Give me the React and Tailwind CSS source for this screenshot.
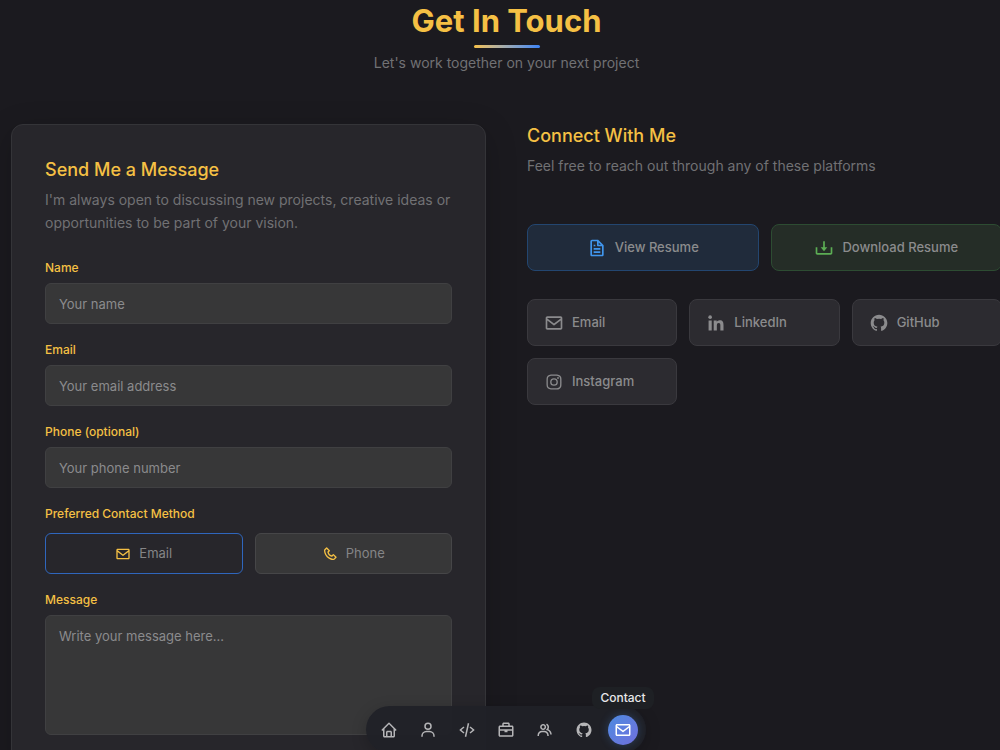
import {
  BiBriefcase, BiCodeAlt, BiDownload, BiEnvelope, BiFile, BiGroup, BiHome,
  BiLogoGithub, BiLogoInstagram, BiLogoLinkedin, BiPhone, BiUser,
} from "react-icons/bi";

const fields = [
  { id: "name", label: "Name", type: "text", placeholder: "Your name" },
  { id: "email", label: "Email", type: "email", placeholder: "Your email address" },
  { id: "phone", label: "Phone (optional)", type: "tel", placeholder: "Your phone number" },
];

const methods = [
  { label: "Email", Icon: BiEnvelope },
  { label: "Phone", Icon: BiPhone },
];

const socials = [
  { label: "Email", Icon: BiEnvelope },
  { label: "LinkedIn", Icon: BiLogoLinkedin },
  { label: "GitHub", Icon: BiLogoGithub },
  { label: "Instagram", Icon: BiLogoInstagram },
];

const navItems = [
  { label: "Home", Icon: BiHome },
  { label: "About", Icon: BiUser },
  { label: "Skills", Icon: BiCodeAlt },
  { label: "Experience", Icon: BiBriefcase },
  { label: "Community", Icon: BiGroup },
  { label: "GitHub", Icon: BiLogoGithub },
];

const headingClass = "text-lg leading-6 font-medium text-[#f5c044]";
const leadClass = "mt-1.5 text-sm leading-[23px] text-[#717174]";
const labelClass = "block text-xs leading-[18px] font-medium text-[#f5c044]";
const controlClass =
  "block w-full rounded-md border border-[#404042] bg-[#373738] px-[13px] text-[13px] text-[#b0b0b0] placeholder:text-[#8b8b8d] outline-none";

function Header() {
  return (
    <header className="flex flex-col items-center pt-[3px]">
      <h1 className="text-[31px] leading-9 font-bold text-[#f5c044]">Get In Touch</h1>
      <div className="mt-1.5 h-[3px] w-[66px] rounded-full bg-linear-to-r from-[#f5c044] to-[#3b82f6]" />
      <p className="mt-[3px] text-sm leading-[23px] text-[#717174]">Let's work together on your next project</p>
    </header>
  );
}

function ContactForm() {
  return (
    <form className="rounded-xl border border-[#343438] bg-[#27262b] px-[33px] pt-[33px] pb-8 shadow-[0_8px_32px_rgba(0,0,0,0.2)]">
      <h2 className={headingClass}>Send Me a Message</h2>
      <p className={leadClass}>
        I'm always open to discussing new projects, creative ideas or opportunities to be part of your vision.
      </p>
      <div className="mt-[25px] flex flex-col gap-[17px]">
        {fields.map((f) => (
          <div key={f.id} className="flex flex-col gap-1.5">
            <label htmlFor={f.id} className={labelClass}>{f.label}</label>
            <input id={f.id} type={f.type} placeholder={f.placeholder} className={`${controlClass} h-[41px]`} />
          </div>
        ))}
        <fieldset>
          <legend className={labelClass}>Preferred Contact Method</legend>
          <div className="mt-2.5 grid grid-cols-2 gap-3">
            {methods.map(({ label, Icon }, i) => (
              <label
                key={label}
                className="flex h-[41px] items-center justify-center gap-2 rounded-md border border-[#464648] bg-[#373738] text-[13px] text-[#858587] has-checked:border-[#2f66bd] has-checked:bg-transparent"
              >
                <input type="radio" name="method" value={label} defaultChecked={i === 0} className="sr-only" />
                <Icon className="size-4 text-[#f5c044]" />
                {label}
              </label>
            ))}
          </div>
        </fieldset>
        <div className="flex flex-col gap-1.5">
          <label htmlFor="message" className={labelClass}>Message</label>
          <textarea
            id="message"
            placeholder="Write your message here..."
            className={`${controlClass} h-[120px] resize-none py-[11px] leading-[18px]`}
          />
        </div>
      </div>
    </form>
  );
}

function Connect() {
  return (
    <section>
      <h2 className={headingClass}>Connect With Me</h2>
      <p className={leadClass}>Feel free to reach out through any of these platforms</p>
      <div className="mt-[47px] grid grid-cols-2 gap-3 text-[13px] font-medium text-[#8b8b8d]">
        <a href="#resume" className="flex h-[47px] items-center justify-center gap-2 rounded-lg border border-[#234670] bg-[#202b3b]">
          <BiFile className="size-5 text-[#4096ee]" />
          View Resume
        </a>
        <a href="#download" className="flex h-[47px] items-center justify-center gap-2 rounded-lg border border-[#2d4c32] bg-[#252d27]">
          <BiDownload className="size-5 text-[#5cad54]" />
          Download Resume
        </a>
      </div>
      <div className="mt-7 grid grid-cols-3 gap-3 text-[13px] font-medium text-[#8b8b8d]">
        {socials.map(({ label, Icon }) => (
          <a key={label} href={`#${label}`} className="flex h-[47px] items-center gap-2 rounded-lg border border-[#3a393e] bg-[#2c2b30] px-4">
            <Icon className="size-5" />
            {label}
          </a>
        ))}
      </div>
    </section>
  );
}

function Dock() {
  return (
    <nav className="fixed inset-x-0 -bottom-[3px] flex justify-center pl-3">
      <div className="flex h-[47px] items-center gap-[9px] rounded-full bg-[#202127]/95 px-2 text-[#b5b5b7] shadow-[0_4px_16px_rgba(0,0,0,0.2)]">
        {navItems.map(({ label, Icon }) => (
          <a key={label} href={`#${label}`} aria-label={label} className="flex size-[30px] items-center justify-center">
            <Icon className="size-[18px]" />
          </a>
        ))}
        <a
          href="#contact"
          className="relative flex size-[30px] items-center justify-center rounded-full bg-linear-to-br from-[#4a8ae0] to-[#6f6fdd] text-white shadow-[0_0_10px_rgba(74,138,224,0.3)]"
        >
          <BiEnvelope className="size-[18px]" />
          <span className="absolute bottom-9 rounded-lg bg-[#1e2024] px-2 text-xs leading-[22px] font-medium text-[#e8e8ea]">
            Contact
          </span>
        </a>
      </div>
    </nav>
  );
}

export default function App() {
  return (
    <div className="h-screen overflow-hidden bg-[#1b1a1f] font-['Inter',sans-serif]">
      <main className="-mr-[2px] ml-[11px]">
        <Header />
        <div className="mt-[50px] grid grid-cols-2 gap-[41px]">
          <ContactForm />
          <Connect />
        </div>
      </main>
      <Dock />
    </div>
  );
}
